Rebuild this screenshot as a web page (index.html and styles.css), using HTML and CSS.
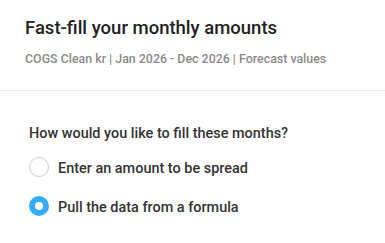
FILE: index.html
```html
<!DOCTYPE html>
<html lang="en">
<head>
    <meta charset="UTF-8">
    <meta name="viewport" content="width=device-width, initial-scale=1.0">
    <title>Fast-fill</title>
    <link rel="stylesheet" href="styles.css">
</head>
<body>
    <div class="dialog">
        <div class="dialog-header">
            <h1 class="dialog-title">Fast-fill your monthly amounts</h1>
            <div class="dialog-subtitle">COGS Clean kr | Jan 2026 - Dec 2026 | Forecast values</div>
        </div>
        <div class="dialog-body">
            <p class="question">How would you like to fill these months?</p>
            <label class="option">
                <span class="radio"></span>
                <span class="option-label">Enter an amount to be spread</span>
            </label>
            <label class="option">
                <span class="radio checked"></span>
                <span class="option-label">Pull the data from a formula</span>
            </label>
        </div>
    </div>
</body>
</html>
```

FILE: styles.css
```css
body {
    margin: 0;
    background-color: #fff;
    font-family: Roboto, "Liberation Sans", sans-serif;
    color: #222;
}

.dialog-header {
    padding: 16px 25px 23px;
    border-bottom: 1px solid #eee;
}

.dialog-title {
    margin: 0;
    font-size: 18.5px;
    font-weight: 500;
    line-height: 24px;
    color: #222;
}

.dialog-subtitle {
    margin-top: 11px;
    font-size: 12.4px;
    font-weight: 500;
    line-height: 16px;
    color: #8a8a8a;
}

.dialog-body {
    padding: 33px 29px 0;
}

.question {
    margin: 0 0 13px;
    font-size: 14.45px;
    font-weight: 500;
    line-height: 20px;
    color: #333;
}

.option {
    display: flex;
    align-items: center;
    gap: 9px;
    height: 20px;
    margin-bottom: 19px;
    font-size: 14.45px;
    font-weight: 500;
    color: #333;
    cursor: pointer;
}

.radio {
    box-sizing: border-box;
    width: 20px;
    height: 20px;
    border: 1px solid #ccc;
    border-radius: 50%;
    background-color: #fff;
}

.radio.checked {
    border: 6px solid #34acf5;
}

.option-label {
    padding-top: 4px;
    line-height: 20px;
}
```
